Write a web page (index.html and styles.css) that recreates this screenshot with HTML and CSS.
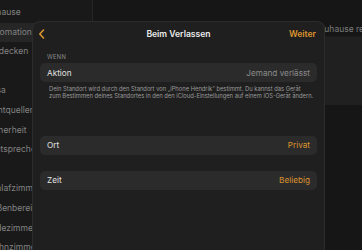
FILE: index.html
```html
<!DOCTYPE html>
<html lang="de">
<head>
    <meta charset="UTF-8">
    <meta name="viewport" content="width=device-width, initial-scale=1.0">
    <title>Beim Verlassen</title>
    <link rel="stylesheet" href="styles.css">
</head>
<body>
    <div class="app">
        <nav class="sidebar">
            <div class="side-item">Zuhause</div>
            <div class="side-item active">Automation</div>
            <div class="side-item">Entdecken</div>
            <div class="side-item empty"></div>
            <div class="side-item">Kasa</div>
            <div class="side-item">Lichtquellen</div>
            <div class="side-item">Sicherheit</div>
            <div class="side-item">Lautsprecher</div>
            <div class="side-item empty"></div>
            <div class="side-item">Schlafzimmer</div>
            <div class="side-item">Außenbereich</div>
            <div class="side-item">Badezimmer</div>
            <div class="side-item">Wohnzimmer</div>
        </nav>
        <main class="main">
            <div class="main-title">Zuhause reagiert</div>
            <div class="main-card"></div>
        </main>
    </div>

    <div class="sheet">
        <header class="sheet-header">
            <svg class="back" width="7" height="10" viewBox="0 0 7 10">
                <path d="M5.5 1 L1.8 5 L5.5 9" fill="none" stroke="currentColor" stroke-width="1.6" stroke-linecap="round" stroke-linejoin="round"/>
            </svg>
            <h1 class="sheet-title">Beim Verlassen</h1>
            <span class="next">Weiter</span>
        </header>
        <div class="sheet-body">
            <div class="section-label">WENN</div>
            <div class="row">
                <span class="row-label">Aktion</span>
                <span class="row-value">Jemand verlässt</span>
            </div>
            <p class="note">Dein Standort wird durch den Standort von „iPhone Hendrik“ bestimmt. Du kannst das Gerät<br>zum Bestimmen deines Standortes in den den iCloud-Einstellungen auf einem iOS-Gerät ändern.</p>
            <div class="row row-ort">
                <span class="row-label">Ort</span>
                <span class="row-value accent">Privat</span>
            </div>
            <div class="row row-zeit">
                <span class="row-label">Zeit</span>
                <span class="row-value accent">Beliebig</span>
            </div>
        </div>
    </div>
</body>
</html>
```

FILE: styles.css
```css
:root {
    --accent: #dc942f;
    --sheet-bg: #1f1f1f;
    --row-bg: #2b2b2b;
    --text: #e2e2e2;
    --muted: #8c8c8c;
}

* {
    box-sizing: border-box;
    margin: 0;
    padding: 0;
}

body {
    font-family: Inter, "Noto Sans", "Liberation Sans", sans-serif;
    background-color: #141414;
    color: var(--text);
    width: 362px;
    height: 250px;
    overflow: hidden;
    position: relative;
}

.app {
    display: flex;
    height: 250px;
}

/* background, dimmed under the sheet */
.sidebar {
    width: 93px;
    flex-shrink: 0;
    background-color: #191919;
    border-right: 1px solid #262626;
    padding-top: 3px;
    overflow: hidden;
}

.side-item {
    height: 19.6px;
    line-height: 19.6px;
    font-size: 8.5px;
    color: #828282;
    margin-left: -14px;
    white-space: nowrap;
}

.side-item.active {
    background-color: #262626;
    margin-left: 0;
    text-indent: -14px;
}

.main {
    flex: 1;
    min-width: 0;
    overflow: hidden;
    background-color: #161616;
}

.main-title {
    height: 37px;
    padding-top: 24px;
    padding-left: 226px;
    font-size: 8.5px;
    color: #7c7c7c;
    white-space: nowrap;
    overflow: hidden;
    border-bottom: 1px solid #1c1c1c;
}

.main-card {
    height: 68px;
    background-color: #202020;
}

/* modal sheet */
.sheet {
    position: absolute;
    left: 32px;
    top: 21px;
    width: 293px;
    height: 240px;
    background-color: var(--sheet-bg);
    border: 1px solid #2c2c2c;
    border-bottom: none;
    border-radius: 8px 8px 0 0;
}

.sheet-header {
    height: 24px;
    display: flex;
    align-items: center;
    justify-content: space-between;
    padding: 0 8px 0 5px;
    position: relative;
}

.back {
    color: var(--accent);
    display: block;
}

.sheet-title {
    position: absolute;
    left: 0;
    right: 0;
    text-align: center;
    font-size: 8.6px;
    font-weight: 600;
    color: #ececec;
    pointer-events: none;
}

.next {
    font-size: 8.6px;
    font-weight: 600;
    color: var(--accent);
}

.sheet-body {
    padding: 6px 7px 0;
}

.section-label {
    font-size: 5.8px;
    letter-spacing: 0.3px;
    color: var(--muted);
    padding-left: 7px;
    height: 11px;
    line-height: 10px;
}

.row {
    height: 19px;
    background-color: var(--row-bg);
    border-radius: 5px;
    display: flex;
    align-items: center;
    justify-content: space-between;
    padding: 0 7px;
    font-size: 8.2px;
}

.row-label {
    color: var(--text);
}

.row-value {
    color: var(--muted);
}

.row-value.accent {
    color: var(--accent);
}

.note {
    font-size: 5.8px;
    line-height: 7.4px;
    color: #9a9a9a;
    padding: 3px 0 0 9px;
    white-space: nowrap;
}

.row-ort {
    margin-top: 36px;
}

.row-zeit {
    margin-top: 16px;
}
```
